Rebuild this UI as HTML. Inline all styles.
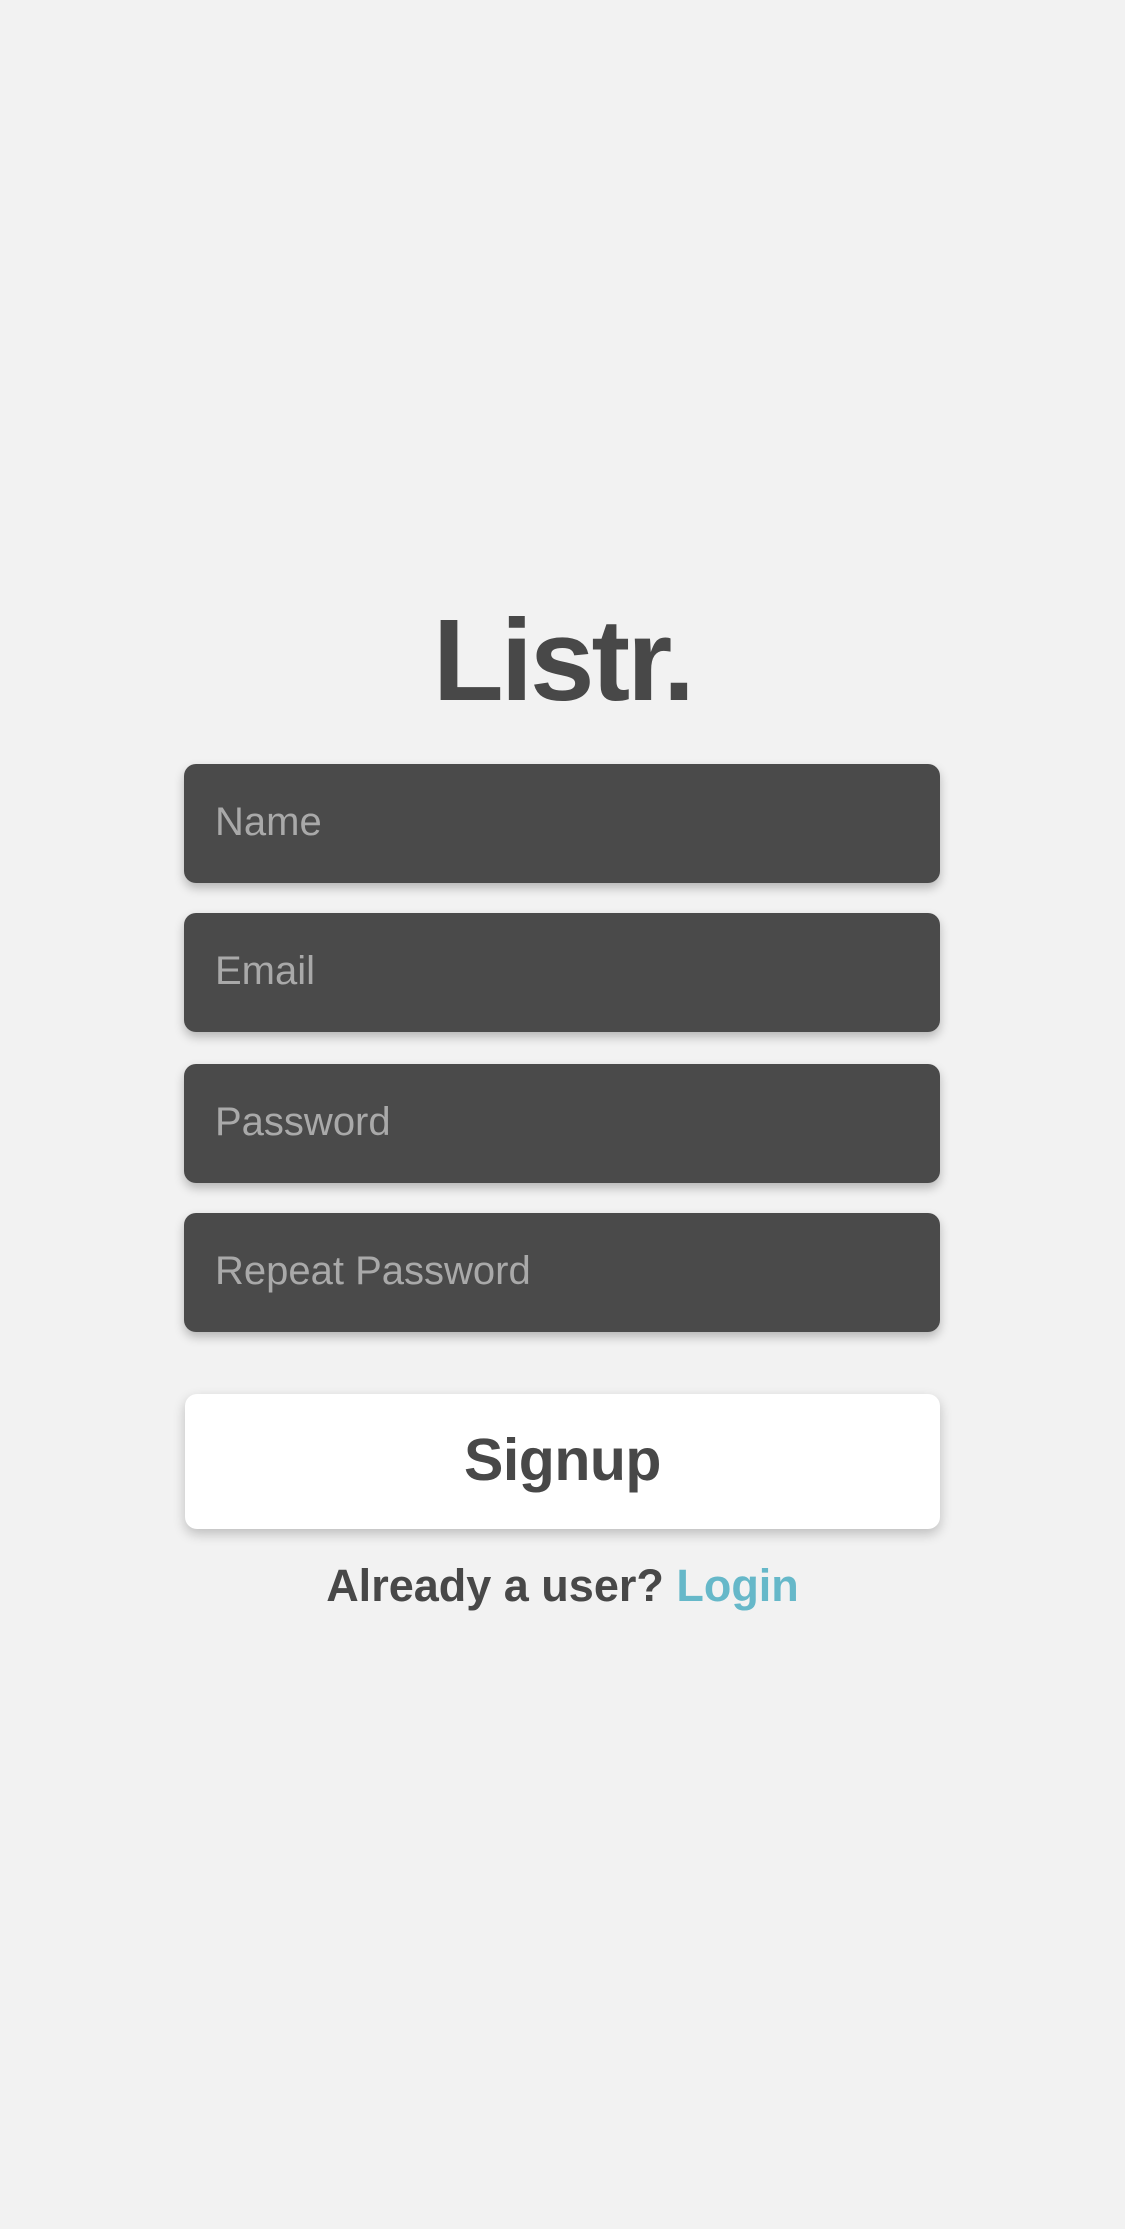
<!DOCTYPE html>
<html><head><meta charset="utf-8"><style>
html,body{margin:0;padding:0;background:#f2f2f2;width:1125px;height:2229px;overflow:hidden;font-family:"Liberation Sans",sans-serif;}
.t{position:absolute;left:0;width:1125px;text-align:center;color:#484848;font-weight:bold;}
.box{position:absolute;left:184px;width:756px;height:119px;background:#4a4a4a;border-radius:12px;box-shadow:0 5px 10px rgba(0,0,0,0.25);}
.box span{position:absolute;left:31px;top:36px;font-size:40px;line-height:45px;color:#a9a9a9;}
.btn{position:absolute;left:185px;top:1394px;width:755px;height:135px;background:#fff;border-radius:12px;box-shadow:0 5px 12px rgba(0,0,0,0.22);}
</style></head><body>
<div class="t" style="top:590px;font-size:116px;line-height:140px;letter-spacing:-3px;">Listr.</div>
<div class="box" style="top:764px"><span>Name</span></div>
<div class="box" style="top:913px"><span>Email</span></div>
<div class="box" style="top:1064px"><span>Password</span></div>
<div class="box" style="top:1213px"><span>Repeat Password</span></div>
<div class="btn"></div>
<div class="t" style="top:1425px;font-size:59px;line-height:70px;letter-spacing:-0.5px;">Signup</div>
<div class="t" style="top:1560px;font-size:45px;line-height:52px;letter-spacing:0px;">Already a user? <span style="color:#66b8c9">Login</span></div>
</body></html>
